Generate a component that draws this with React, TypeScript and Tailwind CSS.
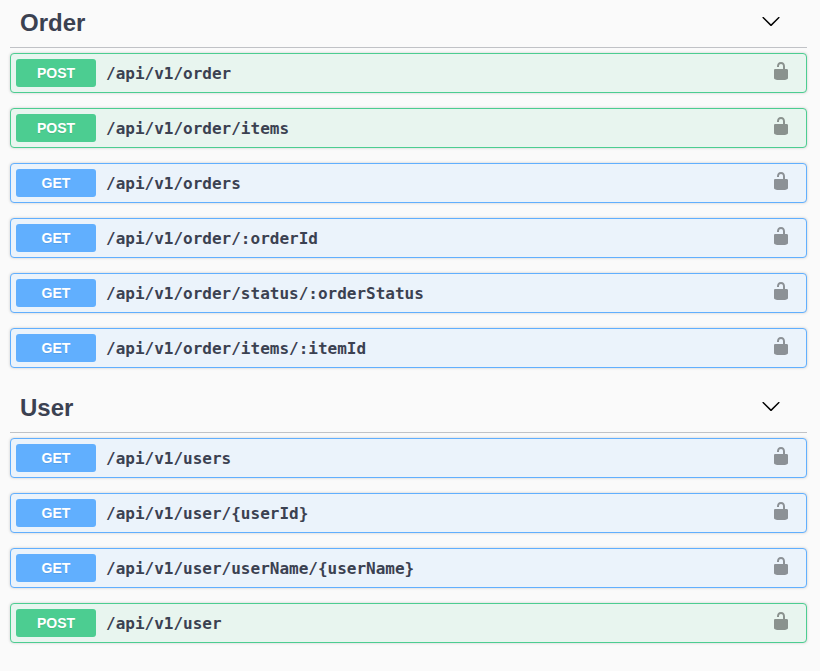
type Method = 'GET' | 'POST';

interface Endpoint {
  method: Method;
  path: string;
}

interface Section {
  title: string;
  endpoints: Endpoint[];
}

const sections: Section[] = [
  {
    title: 'Order',
    endpoints: [
      { method: 'POST', path: '/api/v1/order' },
      { method: 'POST', path: '/api/v1/order/items' },
      { method: 'GET', path: '/api/v1/orders' },
      { method: 'GET', path: '/api/v1/order/:orderId' },
      { method: 'GET', path: '/api/v1/order/status/:orderStatus' },
      { method: 'GET', path: '/api/v1/order/items/:itemId' },
    ],
  },
  {
    title: 'User',
    endpoints: [
      { method: 'GET', path: '/api/v1/users' },
      { method: 'GET', path: '/api/v1/user/{userId}' },
      { method: 'GET', path: '/api/v1/user/userName/{userName}' },
      { method: 'POST', path: '/api/v1/user' },
    ],
  },
];

const blockStyles: Record<Method, string> = {
  GET: 'border-[#61affe] bg-[#ebf3fb]',
  POST: 'border-[#4ccd91] bg-[#e8f5ef]',
};

const badgeStyles: Record<Method, string> = {
  GET: 'bg-[#61affe]',
  POST: 'bg-[#4ccd91]',
};

function Chevron() {
  return (
    <svg width="20" height="20" viewBox="0 0 20 20" fill="#000">
      <path d="M17.418 6.109c.272-.268.709-.268.979 0s.271.701 0 .969l-7.908 7.83c-.27.268-.707.268-.979 0l-7.908-7.83c-.27-.268-.27-.701 0-.969s.709-.268.979 0L10 13.25l7.418-7.141z" />
    </svg>
  );
}

function Unlocked() {
  return (
    <svg width="20" height="20" viewBox="0 0 20 20" fill="#000" className="opacity-40">
      <path d="M15.8 8H14V5.6C14 2.703 12.665 1 10 1 7.334 1 6 2.703 6 5.6V6h2v-.801C8 3.754 8.797 3 10 3c1.203 0 2 .754 2 2.199V8H4c-.553 0-1 .646-1 1.199V17c0 .549.428 1.139.951 1.307l1.197.387C5.672 18.861 6.55 19 7.1 19h5.8c.549 0 1.428-.139 1.951-.307l1.196-.387c.524-.167.953-.757.953-1.306V9.199C17 8.646 16.352 8 15.8 8z" />
    </svg>
  );
}

function EndpointRow({ method, path }: Endpoint) {
  return (
    <div
      className={`flex h-10 items-center rounded border pl-[5px] pr-[15px] shadow-[0_0_3px_rgba(0,0,0,0.19)] ${blockStyles[method]}`}
    >
      <span
        className={`flex h-7 w-20 items-center justify-center rounded-[3px] text-sm font-bold text-white [text-shadow:0_1px_0_rgba(0,0,0,0.1)] ${badgeStyles[method]}`}
      >
        {method}
      </span>
      <span className="flex-1 pl-2.5 pt-0.5 font-['DejaVu_Sans_Mono',monospace] text-base font-semibold leading-5">
        {path}
      </span>
      <span className="pb-1">
        <Unlocked />
      </span>
    </div>
  );
}

export default function App() {
  return (
    <main className="h-[671px] overflow-hidden bg-[#fafafa] pl-2.5 pr-[13px] font-['Liberation_Sans',sans-serif] text-[#3b4151]">
      {sections.map((section) => (
        <section key={section.title} className="mb-[17px]">
          <header className="mb-[5px] flex h-12 items-center justify-between border-b border-[rgba(59,65,81,0.3)] pb-0.5 pl-2.5 pr-[26px]">
            <h2 className="text-2xl font-bold">{section.title}</h2>
            <span className="pb-1">
              <Chevron />
            </span>
          </header>
          <div className="flex flex-col gap-[15px]">
            {section.endpoints.map((endpoint) => (
              <EndpointRow key={endpoint.path} {...endpoint} />
            ))}
          </div>
        </section>
      ))}
    </main>
  );
}
